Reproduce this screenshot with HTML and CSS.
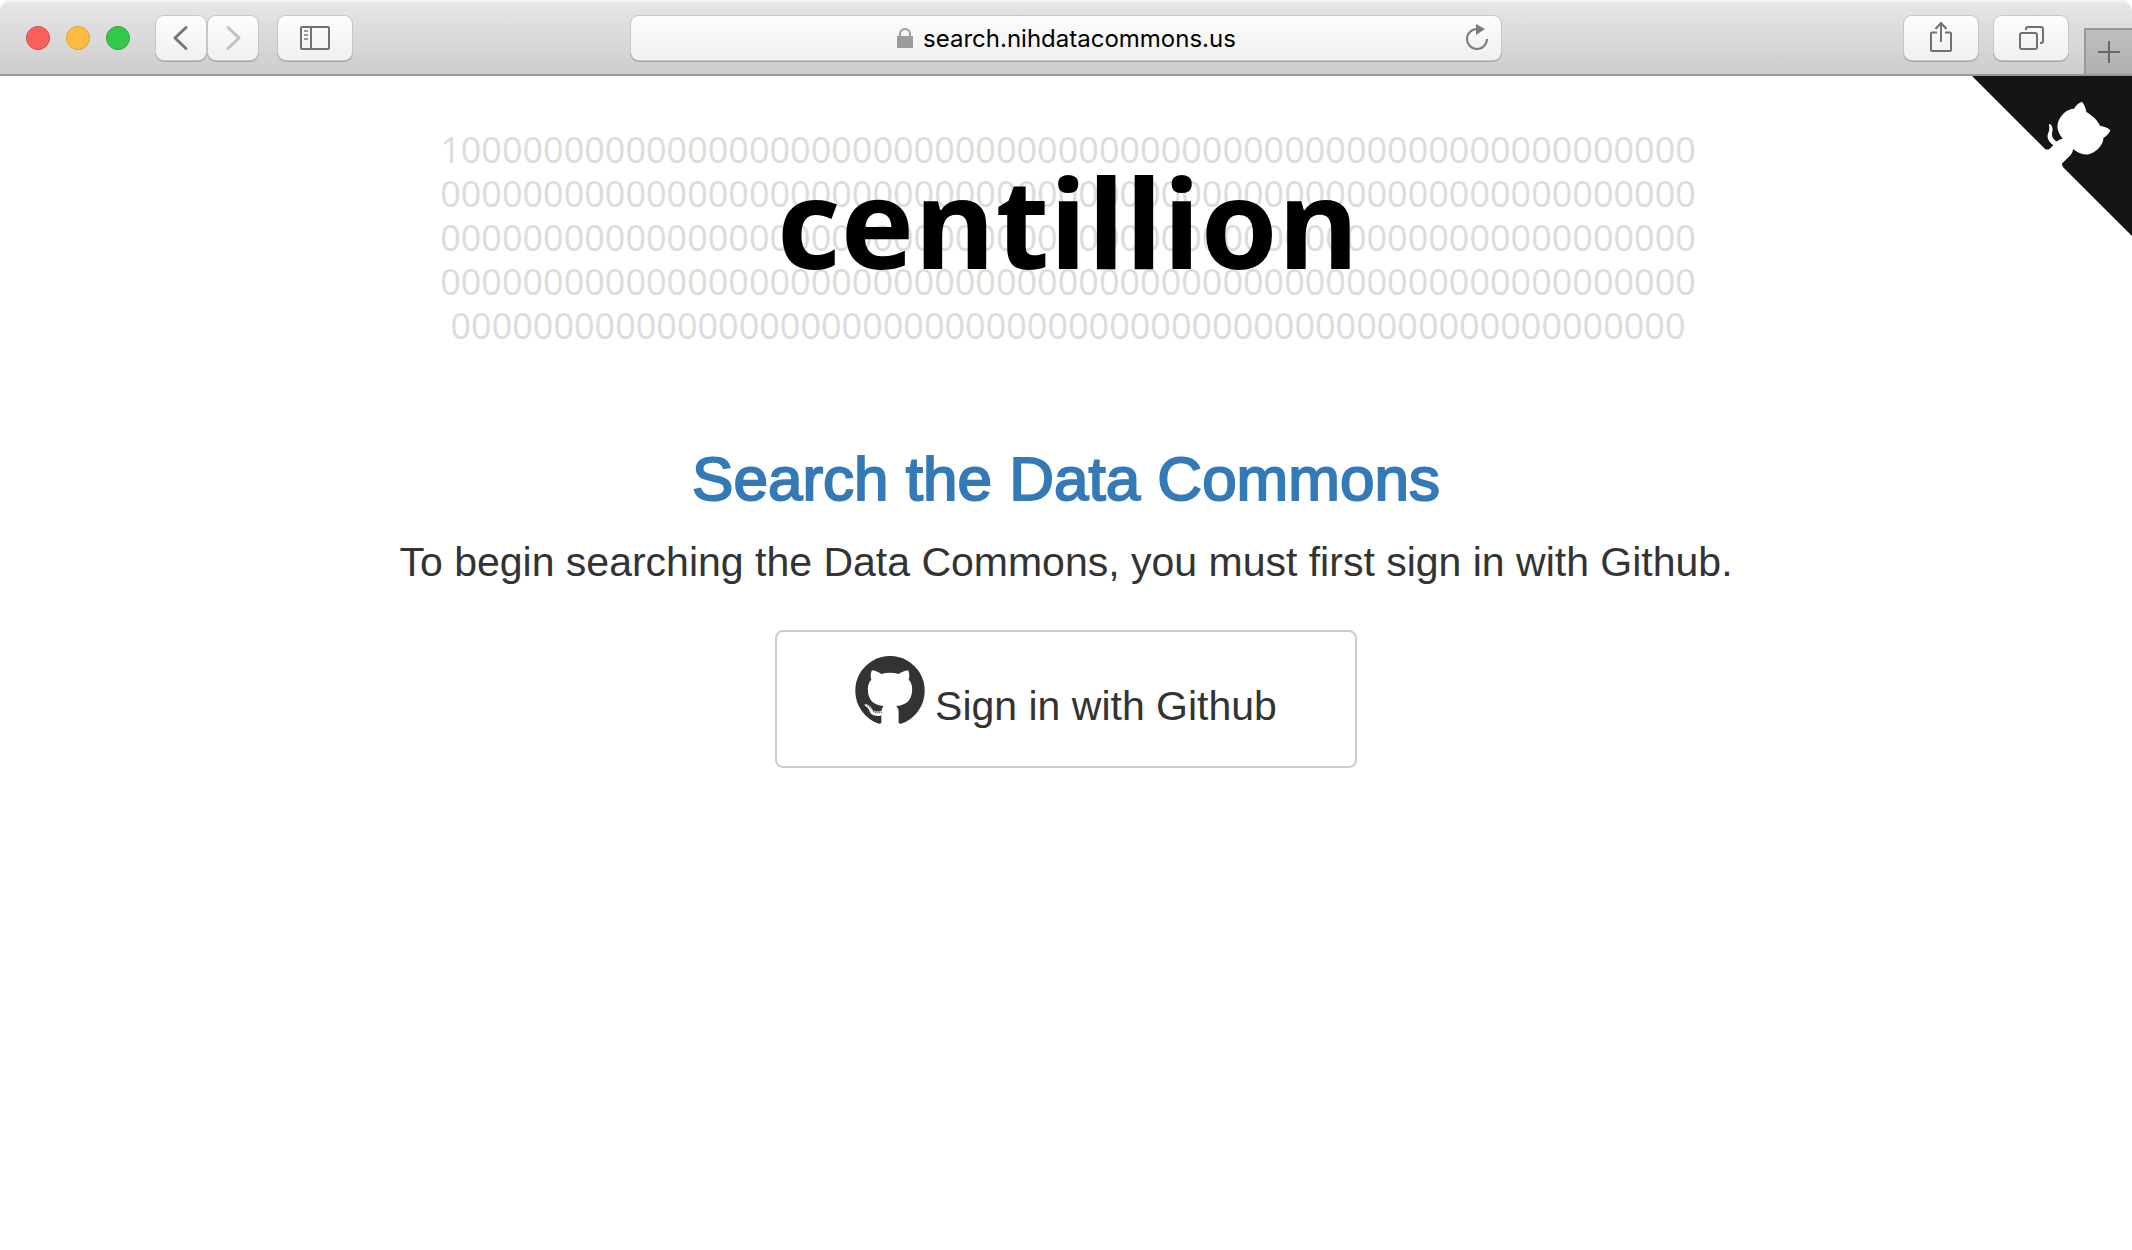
FILE: index.html
```html
<!DOCTYPE html>
<html lang="en">
<head>
<meta charset="utf-8">
<title>centillion</title>
<link rel="stylesheet" href="styles.css">
</head>
<body>
<header class="toolbar">
  <div class="side">
    <div class="lights"><span class="light red"></span><span class="light yellow"></span><span class="light green"></span></div>
    <div class="history">
      <button class="tool narrow" aria-label="Back"><svg width="50" height="46" viewBox="0 0 50 46" fill="none" stroke="#777" stroke-width="3" stroke-linecap="round" stroke-linejoin="round"><path d="M30 12.500 19 23l11 10.500"/></svg></button>
      <button class="tool narrow" aria-label="Forward"><svg width="50" height="46" viewBox="0 0 50 46" fill="none" stroke="#c2c2c2" stroke-width="3" stroke-linecap="round" stroke-linejoin="round"><path d="M20 12.500 31 23 20 33.500"/></svg></button>
    </div>
    <button class="tool" aria-label="Sidebar"><svg width="74" height="46" viewBox="0 0 74 46" fill="none" stroke="#717171" stroke-width="2"><rect x="23" y="12" width="28" height="22" rx="1"/><path d="M33 12v22"/><path d="M26 16h4M26 20h4M26 24h4" stroke="#999"/></svg></button>
  </div>
  <div class="address">
    <svg class="lock" width="18" height="22" viewBox="0 0 18 22"><path d="M1 9h16v12H1z" fill="#9c9c9c"/><path d="M4 10V7a5 5 0 0 1 10 0v3" fill="none" stroke="#9c9c9c" stroke-width="2"/></svg>
    <span class="url">search.nihdatacommons.us</span>
    <button class="reload" aria-label="Reload"><svg width="28" height="30" viewBox="0 0 28 30"><path d="M14 6a10 10 0 1 0 10 10" fill="none" stroke="#7b7b7b" stroke-width="2"/><path d="M13 1l9 5-9 6z" fill="#7b7b7b"/></svg></button>
  </div>
  <div class="side end">
    <button class="tool" aria-label="Share"><svg width="74" height="46" viewBox="0 0 74 46" fill="none" stroke="#717171" stroke-width="2"><path d="M33 17.500H28q-1 0-1 1V35q0 1 1 1h18q1 0 1-1V18.500q0-1-1-1h-5M37 27V9M31.500 14 37 8l5.500 6"/></svg></button>
    <button class="tool" aria-label="Tabs"><svg width="74" height="46" viewBox="0 0 74 46" fill="none" stroke="#717171" stroke-width="2"><rect x="26" y="18" width="17" height="16" rx="2"/><path d="M32 15v-1q0-2 2-2h13q2 0 2 2v12q0 2-2 2h-1"/></svg></button>
    <button class="newtab" aria-label="New tab"><svg width="24" height="24" viewBox="0 0 24 24" stroke="#666" stroke-width="2"><path d="M12 1v22M1 12h22"/></svg></button>
  </div>
</header>

<main class="page">
  <a class="corner" href="#" aria-label="View source on Github">
    <svg width="160" height="160" viewBox="0 0 250 250"><path fill="#151513" d="M0,0 L115,115 L130,115 L142,142 L250,250 L250,0 Z"/><path fill="#fff" d="M128.3,109.0 C113.8,99.7 119.0,89.6 119.0,89.6 C122.0,82.7 120.5,78.6 120.5,78.6 C119.2,72.0 123.4,76.3 123.4,76.3 C127.3,80.9 125.5,87.3 125.5,87.3 C122.9,97.6 130.6,101.9 134.4,103.2"/><path fill="#fff" d="M115.0,115.0 C114.9,115.1 118.7,116.5 119.8,115.4 L133.7,101.6 C136.9,99.2 139.9,98.4 142.2,98.6 C133.8,88.0 127.5,74.4 143.8,58.0 C148.5,53.4 154.0,51.2 159.7,51.0 C160.3,49.4 163.2,43.6 171.4,40.1 C171.4,40.1 176.1,42.5 178.8,56.2 C183.1,58.6 187.2,61.8 190.9,65.4 C194.5,69.0 197.7,73.2 200.1,77.6 C213.8,80.2 216.3,84.9 216.3,84.9 C212.7,93.1 206.9,96.0 205.4,96.6 C205.1,102.4 203.0,107.8 198.3,112.5 C181.9,128.9 168.3,122.5 157.7,114.1 C157.9,116.9 156.7,120.9 152.7,124.9 L141.0,136.5 C139.8,137.7 141.6,141.9 141.8,141.8 Z"/></svg>
  </a>

  <div class="logo">
    <div class="digits">
      <div>1000000000000000000000000000000000000000000000000000000000000</div>
      <div>0000000000000000000000000000000000000000000000000000000000000</div>
      <div>0000000000000000000000000000000000000000000000000000000000000</div>
      <div>0000000000000000000000000000000000000000000000000000000000000</div>
      <div>000000000000000000000000000000000000000000000000000000000000</div>
    </div>
    <h1 class="wordmark">centillion</h1>
  </div>

  <h2 class="title"><a href="#">Search the Data Commons</a></h2>
  <p class="lead">To begin searching the Data Commons, you must first sign in with Github.</p>
  <button class="signin">
    <svg width="70" height="68" viewBox="0 0 1536 1504"><path fill="#333" d="M768 0q209 0 385.500 103t279.500 279.500 103 385.500q0 251-146.500 451.500t-378.500 277.500q-27 5-40-7t-13-30q0-3 .5-76.500t.5-134.500q0-97-52-142 57-6 102.500-18t94-39 81-66.500 53-105 20.500-150.500q0-119-79-206 37-91-8-204-28-9-81 11t-92 44l-38 24q-93-26-192-26t-192 26q-16-11-42.500-27t-83.500-38.500-85-13.500q-45 113-8 204-79 87-79 206 0 85 20.500 150t52.500 105 80.500 67 94 39 102.500 18q-39 36-49 103-21 10-45 15t-57 5-65.500-21.500-55.500-62.500q-19-32-48.500-52t-49.500-24l-20-3q-21 0-29 4.500t-5 11.500 9 14 13 12l7 5q22 10 43.500 38t31.500 51l10 23q13 38 44 61.500t67 30 69.500 7 55.500-3.500l23-4q0 38 .5 88.500t.5 54.500q0 18-13 30t-40 7q-232-77-378.500-277.500t-146.500-451.500q0-209 103-385.500t279.500-279.500 385.500-103z"/><path fill="none" stroke="#333" stroke-width="26" stroke-linecap="round" stroke-dasharray="1 44" d="M278 1098Q350 1150 395 1215T580 1243"/></svg>
    <span>Sign in with Github</span>
  </button>
</main>
</body>
</html>
```
FILE: styles.css
```css
* { box-sizing: border-box; }
body { margin: 0; background: #fff; color: #333; font-family: "Liberation Sans", Arial, sans-serif; }
button { font: inherit; color: inherit; padding: 0; border: 0; background: none; }
svg { display: block; flex: none; }

.toolbar {
  display: grid;
  grid-template-columns: 1fr minmax(0, 870px) 1fr;
  align-items: center;
  height: 76px;
  padding-top: 2px;
  border-bottom: 2px solid #989898;
  border-radius: 10px 10px 0 0;
  background: linear-gradient(#e7e7e7, #cdcdcd);
  box-shadow: inset 0 2px 0 #f3f3f3;
}
.side { display: flex; align-items: center; padding-left: 26px; height: 100%; }
.end { justify-content: flex-end; padding-left: 0; gap: 16px; }
.lights { display: flex; gap: 16px; margin-right: 26px; }
.light { width: 24px; height: 24px; border-radius: 50%; border: 1px solid; }
.red { background: #fc605b; border-color: #e0443e; }
.yellow { background: #fdbc40; border-color: #dfa033; }
.green { background: #34c84a; border-color: #24ab35; }
.history { display: flex; gap: 2px; margin-right: 20px; }
.tool {
  width: 74px;
  height: 44px;
  border-radius: 8px;
  background: linear-gradient(#fdfdfd, #f0f0f0);
  box-shadow: 0 0 0 1px #c6c6c6, 0 1px 0 1px #a6a6a6;
}
.tool svg { margin: -1px 0; }
.narrow { width: 50px; }
.newtab {
  display: flex;
  align-items: center;
  justify-content: center;
  align-self: flex-end;
  width: 48px;
  height: 46px;
  border: 2px solid #989898;
  border-width: 2px 0 0 2px;
  background: linear-gradient(#bebebe, #b0b0b0);
}
.address {
  display: flex;
  align-items: center;
  justify-content: center;
  gap: 9px;
  position: relative;
  height: 44px;
  border-radius: 8px;
  background: linear-gradient(#fdfdfd, #f0f0f0);
  box-shadow: 0 0 0 1px #c6c6c6, 0 1px 0 1px #a6a6a6;
}
.url { padding-top: 2px; color: #000; font: 24px/30px Inter, sans-serif; }
.reload { position: absolute; right: 10px; top: 7px; }

.page { display: flex; flex-direction: column; align-items: center; position: relative; padding: 52px 16px; }
.corner { position: absolute; top: 0; right: 0; }
.logo { display: grid; justify-items: center; align-items: center; padding-left: 4px; font-family: "Open Sans", sans-serif; }
.digits, .wordmark { grid-area: 1 / 1; }
.digits { color: #dcdcdc; font-size: 36px; line-height: 44px; text-align: center; }
.wordmark { margin: 0 0 34px; color: #000; font-size: 124px; line-height: 140px; font-weight: 700; }
.title { margin: 97px 0 0; font-size: 62px; line-height: 68px; font-weight: 400; -webkit-text-stroke: 2px #337ab7; }
.title a { color: #337ab7; text-decoration: none; }
.lead { margin: 19px 0 38px; font-size: 41px; line-height: 60px; }
.signin {
  display: flex;
  align-items: flex-start;
  gap: 10px;
  padding: 24px 78px;
  border: 2px solid #ccc;
  border-radius: 8px;
  font-size: 41px;
  line-height: 44px;
}
.signin span { padding: 28px 0 14px; }
```
